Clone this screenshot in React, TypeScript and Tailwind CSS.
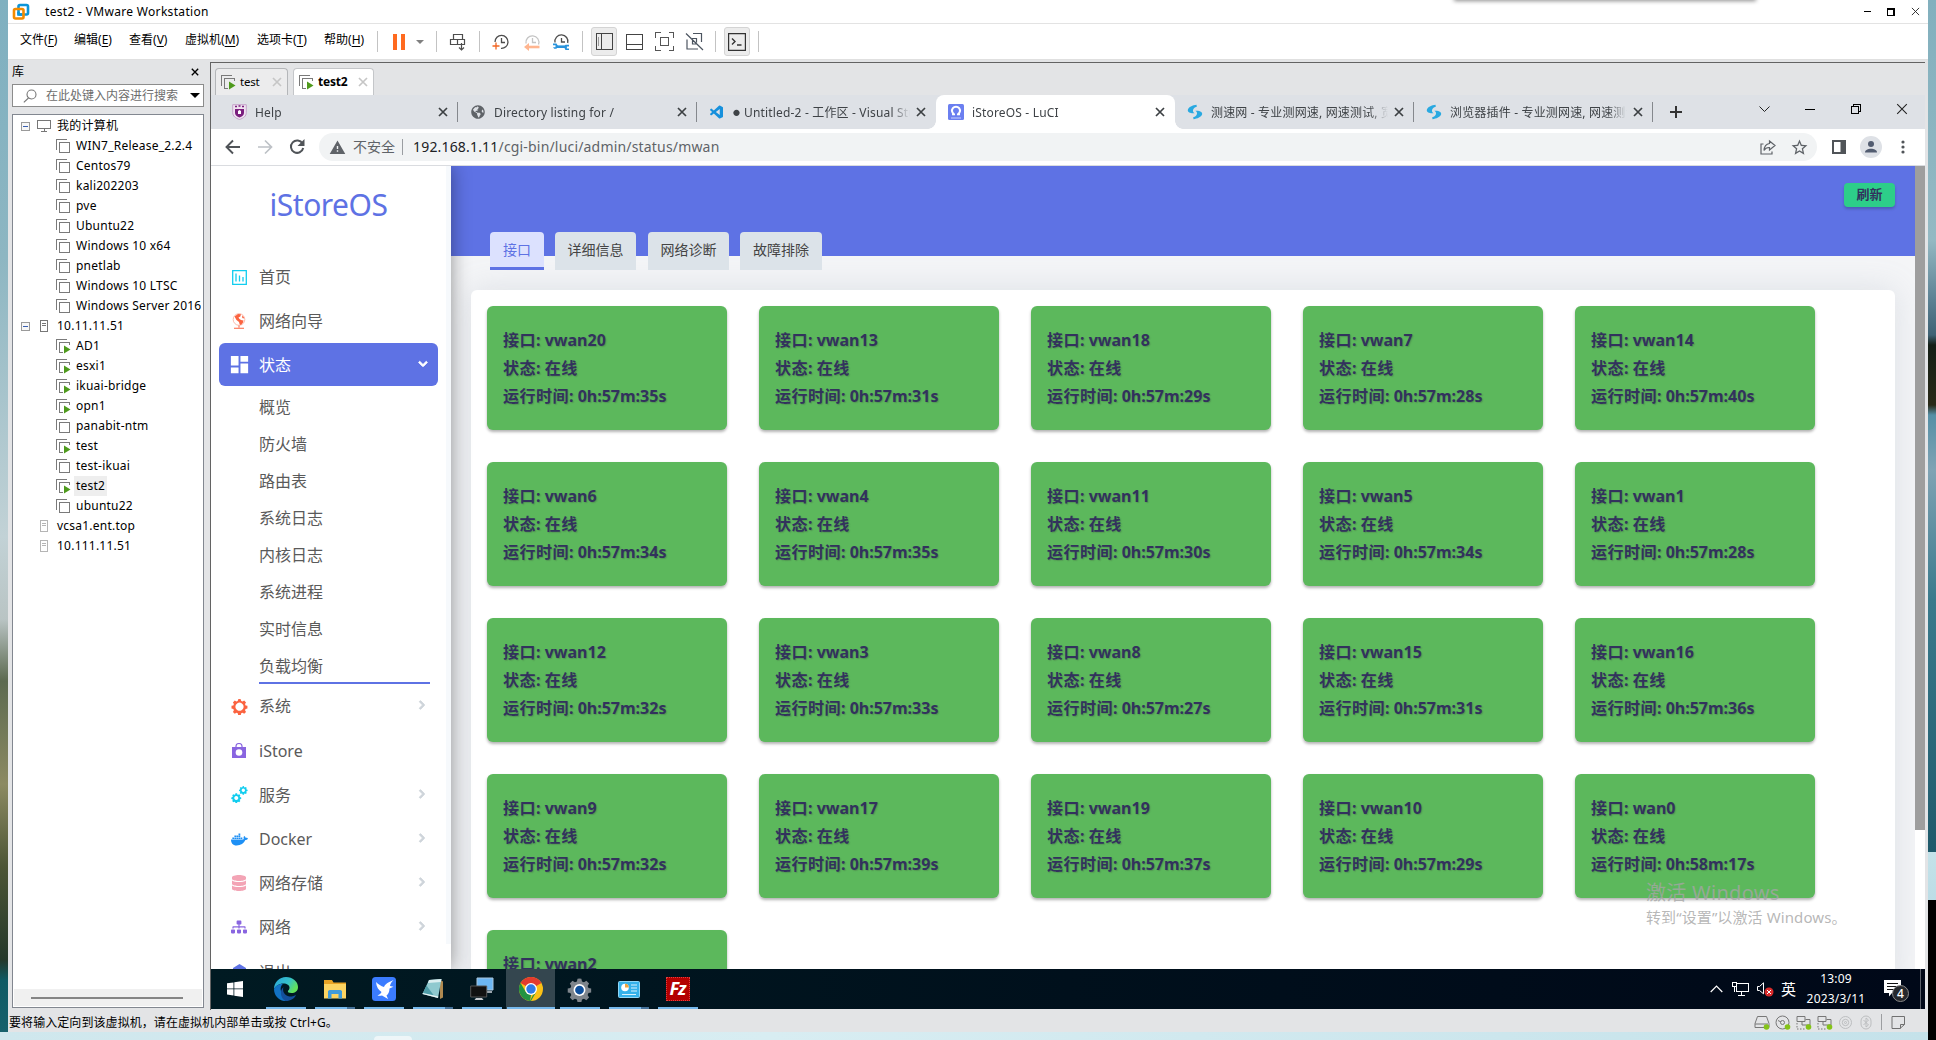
import React from "react";
import { FaDocker, FaDatabase, FaSitemap, FaChevronRight, FaChevronDown, FaGlobeAmericas } from "react-icons/fa";
import { MdDashboard, MdStarBorder, MdWarning } from "react-icons/md";
import { VscVscode } from "react-icons/vsc";

/* ---------- shared pieces ---------- */

const Sep = ({ className }: { className: string }) => <div className={`w-px h-[21px] bg-[#c3c3c3] shrink-0 ${className}`} />;

const Cell = ({ className, children }: { className: string; children: React.ReactNode }) => (
  <div className={`flex items-center justify-center shrink-0 ${className}`}>{children}</div>
);

const CloseX = ({ size, color, width }: { size: number; color: string; width: number }) => (
  <svg width={size} height={size} viewBox="0 0 10 10" fill="none" stroke={color} strokeWidth={width}>
    <path d="M1 1L9 9M9 1L1 9" />
  </svg>
);

const VmIcon = ({ on, fill }: { on?: boolean; fill: string }) => (
  <svg width="15" height="15" viewBox="0 0 15 15" fill="none" stroke="#7a7a7a" shapeRendering="crispEdges" className="shrink-0">
    <path d="M.5 11V.5H11" />
    <rect x="3.5" y="3.5" width="10" height="10" fill={fill} />
    {on && (
      <>
        <rect x="7" y="6" width="8" height="9" fill={fill} stroke="none" />
        <path d="M8 6.5v8l6.5-4z" fill="#4e9a1c" stroke="none" shapeRendering="auto" />
      </>
    )}
  </svg>
);

/* ---------- title and menu bars ---------- */

const menus: [string, string, string][] = [
  ["文件", "F", "w-[54px]"],
  ["编辑", "E", "w-[55px]"],
  ["查看", "V", "w-[56px]"],
  ["虚拟机", "M", "w-[72px]"],
  ["选项卡", "T", "w-[67px]"],
  ["帮助", "H", "w-[53px]"],
];

const clockPath = "M3 10.5A6.5 6.5 0 1 1 15.500 11.500M9.500 5V9.500H13";

function TitleBar() {
  return (
    <div className="relative flex h-[24px] items-center border-b border-[#e3e3e3] bg-white pl-1">
      <div className="absolute -top-1 left-[1447px] h-1 w-[300px] shadow-[0_0_4px_1px_rgba(0,0,0,0.45)]" />
      <svg width="18" height="18" viewBox="0 0 18 18" fill="none" strokeWidth="2.600">
        <rect x="6.500" y="2" width="9.500" height="9.500" rx="1.500" stroke="#0c95d8" />
        <rect x="2" y="6" width="9.500" height="9.500" rx="1.500" stroke="#f38b00" />
        <path d="M6.500 9V11.500H10" stroke="#0c95d8" />
      </svg>
      <span className="ml-[15px] text-[12px] leading-[20px] tracking-[0.32px] text-black">test2 - VMware Workstation</span>
      <div className="ml-auto flex items-center pr-[8px]">
        <div className="h-px w-[7px] bg-black" />
        <div className="ml-[16px] h-[8px] w-[8px] border border-t-2 border-r-2 border-black" />
        <div className="ml-[16px]">
          <CloseX size={9} color="#222" width={1} />
        </div>
      </div>
    </div>
  );
}

function MenuBar() {
  return (
    <div className="flex h-[36px] items-center border-b border-[#e0e0e0] bg-white pl-3">
      {menus.map(([t, k, w]) => (
        <div key={k} className={`${w} shrink-0 whitespace-nowrap pb-[3px] text-[12px] leading-[18px] text-black`}>
          {t}(<span className="underline underline-offset-2">{k}</span>)
        </div>
      ))}
      <Sep className="" />
      <Cell className="ml-2 w-[26px]">
        <div className="flex gap-[4px]">
          <div className="h-[16px] w-[4px] bg-[#ff6a1f]" />
          <div className="h-[16px] w-[4px] bg-[#ff6a1f]" />
        </div>
      </Cell>
      <Cell className="w-[16px]">
        <svg width="8" height="4" viewBox="0 0 8 4"><path d="M0 0h8L4 4z" fill="#808080" /></svg>
      </Cell>
      <Sep className="ml-2" />
      <Cell className="w-[42px]">
        <svg width="18" height="18" viewBox="0 0 18 18" fill="none" stroke="#4d4d4d" strokeWidth="1.200">
          <path d="M4.500 6V1.500h9V6M1.500 6.500h7v5h-7zM8.500 6.500h7v5h-7zM12.500 10v7M10 14.500l2.500 2.500 2.500-2.500" />
        </svg>
      </Cell>
      <Sep className="" />
      <Cell className="ml-[6px] w-[30px]">
        <svg width="18" height="18" viewBox="0 0 18 18" fill="none" stroke="#4d4d4d" strokeWidth="1.300">
          <path d="M3 9A6.500 6.500 0 1 1 9 15.400M9.500 5V9.500H13" />
          <path d="M.5 13h7M4 9.500v7" stroke="#f26522" />
        </svg>
      </Cell>
      <Cell className="ml-px w-[30px]">
        <svg width="18" height="18" viewBox="0 0 18 18" fill="none" stroke="#c4c4c4" strokeWidth="1.300">
          <path d={clockPath} />
          <path d="M16.500 14H6" stroke="#ffb58f" strokeWidth="2.600" />
          <path d="M1 14l5-4v8z" fill="#ffb58f" stroke="none" />
        </svg>
      </Cell>
      <Cell className="w-[28px]">
        <svg width="18" height="18" viewBox="0 0 18 18" fill="none" stroke="#4d4d4d" strokeWidth="1.300">
          <path d="M3 9.500A6.500 6.500 0 1 1 15.700 10M9.500 5V9H13" />
          <path d="M4 13.700H14.500" stroke="#2893dc" strokeWidth="2.600" />
          <path d="M1 10.500h3.500l1.500 2.500-1.500 2.800H2.200L1 14.200h2.500v-2H1zM17 11.800h-3.500L12 14l1.500 3H17v-1.500h-2.200v-2H17z" fill="#2893dc" stroke="none" />
        </svg>
      </Cell>
      <Sep className="ml-[7px]" />
      <Cell className="ml-2 h-[29px] w-[26px] rounded-[3px] border border-[#d4d4d4] bg-[#ececec]">
        <svg width="17" height="17" viewBox="0 0 17 17" fill="none" stroke="#444" shapeRendering="crispEdges">
          <path d="M.5.5h16v16H.5zM5.500.5v16" /><path d="M2.500 4v9" stroke="#999" />
        </svg>
      </Cell>
      <Cell className="w-[34px]">
        <svg width="17" height="16" viewBox="0 0 17 16" fill="none" stroke="#444" shapeRendering="crispEdges">
          <path d="M.5.5h16v15H.5zM.5 10.500h16" />
        </svg>
      </Cell>
      <Cell className="w-[26px]">
        <svg width="19" height="19" viewBox="0 0 19 19" fill="none" stroke="#555" shapeRendering="crispEdges">
          <path d="M.5 5.500v-5h5M13.500.5h5v5M18.500 13.500v5h-5M5.500 18.500h-5v-5M5.500 5.500h8v8h-8z" />
        </svg>
      </Cell>
      <Cell className="w-[34px]">
        <svg width="19" height="19" viewBox="0 0 19 19" fill="none" stroke="#4c5560" strokeWidth="1.200">
          <path d="M8 1.500h8.500V10M2 7.500v9.500h11M7 6.500H11.500V10.500M7.500 8v4h4M1 1.500l17 16.500" />
        </svg>
      </Cell>
      <Sep className="ml-1" />
      <Cell className="ml-2 h-[29px] w-[26px] rounded-[3px] border border-[#d4d4d4] bg-[#ececec]">
        <svg width="18" height="18" viewBox="0 0 18 18" fill="none" stroke="#333" strokeWidth="1.200">
          <path d="M.6.6h16.800v16.800H.6z" /><path d="M4 5.500l3 3-3 3M9 12h4.500" strokeWidth="1.400" />
        </svg>
      </Cell>
      <Sep className="ml-2" />
    </div>
  );
}

/* ---------- library panel ---------- */

type Node = { t: string; kind: "pc" | "host" | "hostOff" | "vm" | "on"; sel?: boolean };
const tree: Node[] = [
  { t: "我的计算机", kind: "pc" },
  { t: "WIN7_Release_2.2.4", kind: "vm" },
  { t: "Centos79", kind: "vm" },
  { t: "kali202203", kind: "vm" },
  { t: "pve", kind: "vm" },
  { t: "Ubuntu22", kind: "vm" },
  { t: "Windows 10 x64", kind: "vm" },
  { t: "pnetlab", kind: "vm" },
  { t: "Windows 10 LTSC", kind: "vm" },
  { t: "Windows Server 2016", kind: "vm" },
  { t: "10.11.11.51", kind: "host" },
  { t: "AD1", kind: "on" },
  { t: "esxi1", kind: "on" },
  { t: "ikuai-bridge", kind: "on" },
  { t: "opn1", kind: "on" },
  { t: "panabit-ntm", kind: "vm" },
  { t: "test", kind: "on" },
  { t: "test-ikuai", kind: "vm" },
  { t: "test2", kind: "on", sel: true },
  { t: "ubuntu22", kind: "vm" },
  { t: "vcsa1.ent.top", kind: "hostOff" },
  { t: "10.111.11.51", kind: "hostOff" },
];

const Expander = () => (
  <svg width="9" height="9" viewBox="0 0 9 9" fill="#f7f7f7" stroke="#9a9a9a" shapeRendering="crispEdges">
    <rect x=".5" y=".5" width="8" height="8" /><path d="M2 4.500h5" stroke="#3a5fb0" />
  </svg>
);

function TreeRow({ n }: { n: Node }) {
  const leaf = n.kind === "vm" || n.kind === "on";
  return (
    <div className="flex h-5 items-center whitespace-nowrap text-[12px] leading-[20px] text-black">
      {leaf ? (
        <div className="ml-[43px] flex w-[18px] shrink-0"><VmIcon on={n.kind === "on"} fill="#fff" /></div>
      ) : (
        <>
          <div className="ml-2 w-4 shrink-0">{n.kind !== "hostOff" && <Expander />}</div>
          <div className="flex w-[18px] shrink-0">
            {n.kind === "pc" ? (
              <svg width="14" height="12" viewBox="0 0 14 12" fill="none" stroke="#777" shapeRendering="crispEdges">
                <path d="M.5.5h13v8H.5zM7 9v2M4 11.500h6" />
              </svg>
            ) : (
              <svg width="9" height="12" viewBox="0 0 9 12" fill="none" stroke={n.kind === "host" ? "#777" : "#b5b5b5"} shapeRendering="crispEdges" className="ml-[3px]">
                <path d="M.5.5h7v11h-7zM2 3.500h4M2 5.500h4" />
              </svg>
            )}
          </div>
        </>
      )}
      <span className={`px-[2px] tracking-[0.23px] ${n.sel ? "bg-[#eeeeee]" : ""}`}>{n.t}</span>
    </div>
  );
}

function Library() {
  return (
    <div className="flex w-[202px] shrink-0 flex-col bg-[#e3e4e6] pl-1 pr-[6px]">
      <div className="flex h-[24px] items-center justify-between pr-[5px] text-[12px] text-black">
        <span>库</span>
        <CloseX size={8} color="#000" width={1.7} />
      </div>
      <div className="flex h-[23px] items-center border border-[#8c8c8c] bg-white pl-[10px] pr-[3px]">
        <svg width="14" height="14" viewBox="0 0 14 14" fill="none" stroke="#777" strokeWidth="1.100">
          <circle cx="8.500" cy="5.500" r="4.500" /><path d="M5.500 9L.8 13.300" />
        </svg>
        <span className="ml-[9px] whitespace-nowrap text-[12px] leading-[18px] text-[#6d6d6d]">在此处键入内容进行搜索</span>
        <svg width="10" height="5" viewBox="0 0 10 5" className="ml-auto"><path d="M0 0h10L5 5z" fill="#000" /></svg>
      </div>
      <div className="mt-[7px] flex h-[894px] flex-col overflow-hidden border border-[#828790] bg-white">
        <div className="pt-px">
          {tree.map((n) => <TreeRow key={n.t} n={n} />)}
        </div>
        <div className="mx-px mb-px mt-auto flex h-[17px] items-center justify-center bg-[#f0f0f0] pr-[2px]">
          <div className="h-[2px] w-[152px] bg-[#858585]" />
        </div>
      </div>
    </div>
  );
}

/* ---------- browser chrome ---------- */

const SpeedIcon = () => (
  <svg width="16" height="16" viewBox="0 0 16 16">
    <path d="M9.500.8C6 1.300 1.200 3 .8 6c-.2 2.500 3.500 3.800 6.800 3.200C5.500 8 5.500 6 6.800 4.500 7.700 3.500 9 3 9.800 2.800z" fill="#29a9e1" />
    <path d="M6.500 15.200c3.500-.5 8.300-2.200 8.700-5.200.2-2.500-3.500-3.800-6.800-3.200 2.100 1.200 2.100 3.200.8 4.700-.9 1-2.200 1.500-3 1.700z" fill="#29a9e1" />
  </svg>
);

const tabs: { t: string; dirty?: boolean; icon: React.ReactNode; active?: boolean; sep?: boolean }[] = [
  {
    t: "Help", sep: true,
    icon: (
      <svg width="15" height="16" viewBox="0 0 15 16">
        <path d="M.7.700h13.600v8c0 3.500-3 5.500-6.800 6.800C3.700 14.200.7 12.200.7 8.700z" fill="#efe3f0" stroke="#c5a3ca" />
        <path d="M3 5h9v4c0 2.300-2 3.500-4.500 4.500C5 12.500 3 11.300 3 9z" fill="#7b1f7e" />
        <path d="M6 7l1.500-1L9 7v3H6z" fill="#fff" /><path d="M3 2.500h2M6.500 2h2M10 2.500h2" stroke="#7b1f7e" strokeWidth="1.500" />
      </svg>
    ),
  },
  { t: "Directory listing for /", sep: true, icon: <FaGlobeAmericas size={14} color="#5f6368" /> },
  { t: "Untitled-2 - 工作区 - Visual Studio", dirty: true, icon: <VscVscode size={17} color="#1690dc" /> },
  {
    t: "iStoreOS - LuCI", active: true,
    icon: (
      <svg width="16" height="16" viewBox="0 0 16 16">
        <rect width="16" height="16" rx="1.500" fill="#6b7ff0" />
        <path d="M6.300 10.300A4 4 0 1 1 9.700 10.300" fill="none" stroke="#fff" strokeWidth="2" />
        <path d="M4 10.500h3M9 10.500h3" stroke="#fff" strokeWidth="1.600" /><path d="M3 14h10" stroke="#b9c3fb" strokeWidth="1.200" />
      </svg>
    ),
  },
  { t: "测速网 - 专业测网速, 网速测试, 宽带", sep: true, icon: <SpeedIcon /> },
  { t: "浏览器插件 - 专业测网速, 网速测试", sep: true, icon: <SpeedIcon /> },
];

function BrowserTabs() {
  return (
    <div className="flex h-[34px] bg-[#dee1e6] pl-2">
      {tabs.map((t) => (
        <div key={t.t} className={`relative flex w-[239px] shrink-0 items-center pl-3 ${t.active ? "rounded-t-lg bg-white" : ""}`}>
          {t.active && (
            <>
              <div className="absolute bottom-0 -left-2 h-2 w-2 bg-[radial-gradient(circle_at_0_0,transparent_7.5px,#fff_8px)]" />
              <div className="absolute bottom-0 -right-2 h-2 w-2 bg-[radial-gradient(circle_at_100%_0,transparent_7.5px,#fff_8px)]" />
            </>
          )}
          <div className="flex w-4 shrink-0 items-center justify-center">{t.icon}</div>
          <div className="ml-2 flex w-[177px] items-center overflow-hidden whitespace-nowrap pt-px text-[12px] leading-[20px] tracking-[0.17px] text-[#3f4347] [mask-image:linear-gradient(to_right,#000_158px,transparent_177px)]">
            {t.dirty && <span className="mr-[5px] w-[6px] text-[7px] leading-[20px]">●</span>}
            <span>{t.t}</span>
          </div>
          <div className="ml-[6px]"><CloseX size={10} color="#3c4043" width={1.7} /></div>
          {t.sep && <div className="absolute right-0 h-5 w-px bg-[#85888d]" />}
        </div>
      ))}
      <div className="flex w-[46px] items-center justify-center">
        <svg width="12" height="12" viewBox="0 0 12 12" stroke="#333" strokeWidth="2"><path d="M6 0v12M0 6h12" /></svg>
      </div>
      <div className="ml-auto flex items-center pb-[6px]">
        <Cell className="w-[46px]"><svg width="11" height="7" viewBox="0 0 11 7" fill="none" stroke="#222"><path d="M.5.500l5 5 5-5" /></svg></Cell>
        <Cell className="w-[46px]"><div className="h-px w-[10px] bg-black" /></Cell>
        <Cell className="w-[46px]">
          <svg width="10" height="10" viewBox="0 0 10 10" fill="none" stroke="#000" shapeRendering="crispEdges"><path d="M.5 2.500h7v7h-7zM2.500 2V.5h7v7H8" /></svg>
        </Cell>
        <Cell className="w-[46px]"><CloseX size={12} color="#222" width={0.9} /></Cell>
      </div>
    </div>
  );
}

function AddressRow() {
  return (
    <div className="flex h-[37px] items-center border-b border-[#dadce0] bg-white pl-[14px] text-[#5f6368]">
      <svg width="16" height="16" viewBox="0 0 16 16" fill="none" stroke="#505458" strokeWidth="1.900"><path d="M15 8H2M8 1.500L1.500 8 8 14.500" /></svg>
      <svg width="16" height="16" viewBox="0 0 16 16" fill="none" stroke="#bdc1c6" strokeWidth="1.700" className="ml-4"><path d="M1 8h13M8 1.500L14.500 8 8 14.500" /></svg>
      <svg width="16" height="16" viewBox="0 0 16 16" fill="none" stroke="#505458" strokeWidth="2" className="ml-4">
        <path d="M13.500 4.500A6.200 6.200 0 1 0 14.200 9" /><path d="M15.500 0v7h-7z" fill="#505458" stroke="none" />
      </svg>
      <div className="ml-[14px] flex h-7 w-[1498px] items-center rounded-full bg-[#f1f3f4] pl-[10px]">
        <MdWarning size={17} color="#5f6368" />
        <span className="ml-[7px] text-[14px] leading-[20px]">不安全</span>
        <div className="ml-[7px] h-4 w-px bg-[#9a9da1]" />
        <span className="ml-[10px] whitespace-nowrap text-[14px] leading-[20px] tracking-[0.18px]">
          <span className="text-[#202124]">192.168.1.11</span>/cgi-bin/luci/admin/status/mwan
        </span>
        <div className="ml-auto flex items-center pr-[8px]">
          <svg width="16" height="16" viewBox="0 0 16 16" fill="none" stroke="#5f6368" strokeWidth="1.200">
            <path d="M3.500 5H1v10h11v-2.500" /><path d="M9.500 2l5.500 4.500-5.500 4.500V8.500C6.500 8.300 5 9.500 4 11.500c.2-4 2.500-6.500 5.500-7z" />
          </svg>
          <MdStarBorder size={19} className="ml-[14px]" />
        </div>
      </div>
      <svg width="14" height="14" viewBox="0 0 14 14" className="ml-[15px]"><path d="M0 0h14v14H0z" fill="#505458" /><path d="M2 2h6.500v10H2z" fill="#fff" /></svg>
      <svg width="22" height="22" viewBox="0 0 22 22" className="ml-[14px]">
        <circle cx="11" cy="11" r="11" fill="#dee1e6" /><circle cx="11" cy="8" r="3" fill="#525c70" /><path d="M5 16.500c0-5 12-5 12 0z" fill="#525c70" />
      </svg>
      <svg width="4" height="14" viewBox="0 0 4 14" className="ml-[19px]" fill="#505458">
        <circle cx="2" cy="2" r="1.600" /><circle cx="2" cy="7" r="1.600" /><circle cx="2" cy="12" r="1.600" />
      </svg>
    </div>
  );
}

/* ---------- router page ---------- */

const gear = "M12 1.500l1.800.2.600 2.600 1.900.8 2.300-1.400 2.600 2.600-1.400 2.300.8 1.900 2.600.6v3.700l-2.600.6-.8 1.900 1.400 2.300-2.600 2.600-2.300-1.400-1.900.8-.6 2.600h-3.700l-.6-2.600-1.900-.8-2.300 1.400-2.600-2.600 1.400-2.300-.8-1.900-2.600-.6v-3.700l2.600-.6.8-1.900-1.400-2.300 2.600-2.600 2.300 1.400 1.900-.8.6-2.600z";

const iconHome = (
  <svg width="15" height="15" viewBox="0 0 15 15" fill="none" stroke="#11cdef" strokeWidth="1.300">
    <path d="M.7.700h13.600v13.600H.7zM4 3.500v8M7.500 5.500v6M11 7v4.500" />
  </svg>
);
const iconGlobe = (
  <svg width="14" height="16" viewBox="0 0 14 16" fill="#fb6340">
    <circle cx="7" cy="6.500" r="5.800" fill="none" stroke="#fbb3a3" strokeWidth=".9" />
    <path d="M2.500 3.500L6 1l3 .3-.7 2.200L6.500 4.500l1 1.500L9 7l2.500.5-.5 2L9 12l-1.300-.5L7 9 4.500 7z" />
    <path d="M10.500 2.500l1.800 2.500-1.300.5-1-1.200zM6.500 12.500h1v2h-1zM2 14.800h10v1H2z" />
  </svg>
);
const iconGear = (
  <svg width="17" height="17" viewBox="0 0 24 24"><path fillRule="evenodd" fill="#fb6340" d={`${gear}M12 6.500a5.800 5.800 0 1 0 .01 0z`} /></svg>
);
const iconBag = (
  <svg width="14" height="15" viewBox="0 0 14 15">
    <path d="M0 4h14v11H0z" fill="#8965e0" /><path d="M4 4V3a3 2.500 0 0 1 6 0v1" fill="none" stroke="#8965e0" strokeWidth="1.200" /><circle cx="7" cy="9.500" r="3.300" fill="#fff" />
  </svg>
);
const iconGears = (
  <svg width="17" height="17" viewBox="0 0 34 34" fill="#11cdef" fillRule="evenodd">
    <g transform="translate(0 13) scale(.88)"><path d={`${gear}M12 8a4.500 4.500 0 1 0 .01 0z`} /></g>
    <g transform="translate(15.500 -1) scale(.76)"><path d={`${gear}M12 8a4.500 4.500 0 1 0 .01 0z`} /></g>
  </svg>
);

const subItems = ["概览", "防火墙", "路由表", "系统日志", "内核日志", "系统进程", "实时信息", "负载均衡"];
const lower: [string, React.ReactNode, boolean][] = [
  ["系统", iconGear, true],
  ["iStore", iconBag, false],
  ["服务", iconGears, true],
  ["Docker", <FaDocker size={17} color="#1e90f5" />, true],
  ["网络存储", <FaDatabase size={16} color="#f3a4b5" />, true],
  ["网络", <FaSitemap size={16} color="#8965e0" />, true],
  ["退出", <svg width="15" height="15" viewBox="0 0 15 15"><path d="M7.500 0L14 4v8H1V4z" fill="#5e72e4" /></svg>, false],
];

function NavItem({ t, icon, arrow }: { t: string; icon: React.ReactNode; arrow?: boolean }) {
  return (
    <div className="flex h-[44.2px] shrink-0 items-center pl-[19px] pr-[19px]">
      <div className="flex w-[18px] justify-center">{icon}</div>
      <span className="ml-[11px]">{t}</span>
      {arrow && <FaChevronRight size={10} color="#ced4da" stroke="#ced4da" strokeWidth={50} className="mb-[2px] ml-auto overflow-visible" />}
    </div>
  );
}

function Sidebar() {
  return (
    <div className="z-10 flex w-[240px] shrink-0 bg-white shadow-[0_0_18px_rgba(0,0,0,0.42)]">
      <div className="flex w-[235px] flex-col text-[16px] leading-[24px]">
        <div className="flex h-[89px] shrink-0 items-start justify-center pt-[17px] text-[30px] leading-[44px] tracking-[-0.5px] text-[#5e72e4]">iStoreOS</div>
        <div className="text-[#5a5a5a]">
          <NavItem t="首页" icon={iconHome} />
          <NavItem t="网络向导" icon={iconGlobe} />
          <div className="ml-2 flex h-[43px] w-[219px] items-center rounded-md bg-[#5e72e4] pl-[11px] pr-[10px] text-white">
            <div className="flex w-[18px] justify-center"><MdDashboard size={23} className="shrink-0" /></div>
            <span className="ml-[11px]">状态</span>
            <FaChevronDown size={10} stroke="#fff" strokeWidth={50} className="mb-[2px] ml-auto overflow-visible" />
          </div>
          <div className="ml-12 mt-[2px] w-[171px]">
            {subItems.map((s, i) => (
              <div key={s} className={`flex h-[37px] items-center ${i === 7 ? "border-b-2 border-[#5e72e4] pt-[2px]" : ""}`}>{s}</div>
            ))}
          </div>
          {lower.map(([t, ic, a]) => <NavItem key={t} t={t} icon={ic} arrow={a} />)}
        </div>
      </div>
      <div className="h-[778px] w-[5px] bg-[#f6f9fc]" />
    </div>
  );
}

const cards: [string, string][] = [
  ["vwan20", "0h:57m:35s"], ["vwan13", "0h:57m:31s"], ["vwan18", "0h:57m:29s"], ["vwan7", "0h:57m:28s"], ["vwan14", "0h:57m:40s"],
  ["vwan6", "0h:57m:34s"], ["vwan4", "0h:57m:35s"], ["vwan11", "0h:57m:30s"], ["vwan5", "0h:57m:34s"], ["vwan1", "0h:57m:28s"],
  ["vwan12", "0h:57m:32s"], ["vwan3", "0h:57m:33s"], ["vwan8", "0h:57m:27s"], ["vwan15", "0h:57m:31s"], ["vwan16", "0h:57m:36s"],
  ["vwan9", "0h:57m:32s"], ["vwan17", "0h:57m:39s"], ["vwan19", "0h:57m:37s"], ["vwan10", "0h:57m:29s"], ["wan0", "0h:58m:17s"],
  ["vwan2", "0h:57m:31s"],
];

const pageTabs: [string, string][] = [
  ["接口", "w-[54px] bg-[#dce1fe] text-[#5e72e4] border-b-3 border-[#5e72e4] pt-[3px]"],
  ["详细信息", "w-[81px] ml-[11px] bg-[#dce3e9] text-[#444]"],
  ["网络诊断", "w-[81px] ml-[12px] bg-[#dce3e9] text-[#444]"],
  ["故障排除", "w-[82px] ml-[11px] bg-[#dce3e9] text-[#444]"],
];

const Zh = ({ children }: { children: React.ReactNode }) => <span className="font-bold tracking-[0.5px]">{children}</span>;

function Page() {
  return (
    <div className="relative flex h-[803px] overflow-hidden bg-[#f4f5f7]">
      <Sidebar />
      <div className="w-[1464px] shrink-0">
        <div className="h-[90px] bg-[#5e72e4]">
          <div className="flex h-[66px] items-start justify-end pr-5 pt-[17px]">
            <div className="h-6 w-[51px] rounded-[4px] bg-[#2dce89] text-center text-[13px] font-bold leading-[22px] text-[#32325d] shadow-[0_2px_3px_rgba(0,0,0,0.2)]">刷新</div>
          </div>
          <div className="flex pl-[39px]">
            {pageTabs.map(([t, c]) => (
              <div key={t} className={`flex h-[38px] items-center justify-center rounded-t pb-[3px] text-[14px] leading-[20px] ${c}`}>{t}</div>
            ))}
          </div>
        </div>
        <div className="ml-5 mt-[34px] h-[700px] w-[1424px] rounded-md bg-white px-4 pt-4 shadow-[0_0_32px_rgba(136,152,170,0.22)]">
          <div className="grid w-[1328px] grid-cols-5 gap-8">
            {cards.map(([n, t]) => (
              <div key={n} className="h-[124px] rounded-md bg-[#5cb85c] pl-4 pt-5 text-[16px] font-bold leading-[28px] text-[#32325d] shadow-[0_2px_3px_rgba(0,0,0,0.3)] [text-shadow:1px_1px_1px_rgba(60,60,60,0.25)]">
                <div><Zh>接口</Zh>: {n}</div>
                <div><Zh>状态</Zh>: <Zh>在线</Zh></div>
                <div className="whitespace-nowrap"><Zh>运行时间</Zh>: {t}</div>
              </div>
            ))}
          </div>
        </div>
      </div>
      <div className="h-full w-[10px] bg-white"><div className="h-[664px] bg-[#9e9e9e]" /></div>
      <div className="absolute left-[1435px] top-[713px] z-20 text-[#a5a5a5]/80">
        <div className="text-[20px] leading-[28px] tracking-[0.3px]">激活 Windows</div>
        <div className="text-[15px] leading-[20px] tracking-[0.1px]">转到“设置”以激活 Windows。</div>
      </div>
    </div>
  );
}

/* ---------- taskbar ---------- */

const taskIcons: { icon: React.ReactNode; bar: number; active?: boolean }[] = [
  {
    bar: 0,
    icon: <svg width="16" height="16" viewBox="0 0 16 16" fill="#fff" className="mr-[3px]"><path d="M0 2.300l6.500-.9v6.100H0zM7.300 1.300L16 0v7.500H7.300zM0 8.300h6.500v6.200L0 13.600zM7.300 8.300H16V16l-8.700-1.300z" /></svg>,
  },
  {
    bar: 1,
    icon: (
      <svg width="24" height="24" viewBox="0 0 24 24">
        <defs>
          <linearGradient id="eg" x1="0" y1="0" x2="1" y2=".5"><stop offset="0" stopColor="#2aa5dc" /><stop offset=".6" stopColor="#35c1c9" /><stop offset="1" stopColor="#62e25a" /></linearGradient>
        </defs>
        <path d="M0 12C0 5 5.500 0 12 0s12 4.500 12 10c0 4-3 6-6.500 6-3 0-4-1-3.500-2s1.500-1.500 1.500-3.500S13 6.500 9.500 6.500C5 6.500 1.500 9 0 12z" fill="url(#eg)" />
        <path d="M0 12c1.500-3 5-5.500 9-5.300C7 8.500 6 11 7 14.500c1 4 5 6.500 9 6.500-2 2.500-4.500 3-6 2.900C4 23 0 18 0 12z" fill="#1272c4" />
        <path d="M9.500 10c-1.500 4 1 9 6 9.500 2.500.2 5-.7 6.500-1.500-1.500 3.500-5.500 6-10 6-4.500-1-7.500-10-2.500-14z" fill="#134f9c" />
      </svg>
    ),
  },
  {
    bar: 2,
    icon: (
      <svg width="22" height="19" viewBox="0 0 22 19">
        <path d="M0 0h8l1.500 2.500H22V8H0z" fill="#e8a325" /><path d="M0 4h22v14.500H0z" fill="#fcd462" /><path d="M4 18.500V11l1.500-1h11l1.500 1v7.500h-3.500V14h-7v4.500z" fill="#3f9bdc" />
      </svg>
    ),
  },
  {
    bar: 1,
    icon: (
      <svg width="24" height="24" viewBox="0 0 24 24">
        <rect width="24" height="24" rx="3.500" fill="#3b7cff" />
        <path d="M4 5c2.500 2.500 5 4 8 5 1-3 4-4.500 9.500-7-2 2-3 3.500-3.500 6l3.500.8-4 1.700c0 3.500-1.500 6-3 7l1.500 3.500-6-3.500c-1.800.5-3.500.3-4.500 0 2-.8 3.500-2 4-3.500C6.500 13 4.500 10 4 5z" fill="#fff" />
      </svg>
    ),
  },
  {
    bar: 2,
    icon: (
      <svg width="24" height="24" viewBox="0 0 24 24">
        <path d="M19 3l3 1.500v16L19 22z" fill="#b08a50" /><path d="M8 3l12.500-1-3.500 19L1.500 17z" fill="#8fc9cf" /><path d="M8 3l12.500-1-.6 3L7 6z" fill="#dbeef0" /><path d="M5.500 8.500l7 9.500-11-1z" fill="#4f9da8" /><path d="M1.500 17l15.500 4 .3-1.500L2 16z" fill="#eaf4f5" />
      </svg>
    ),
  },
  {
    bar: 1,
    icon: (
      <svg width="24" height="24" viewBox="0 0 24 24">
        <path d="M7 1h16v12H7z" fill="#6cb7f4" stroke="#a9c6dc" /><path d="M17 14h5v2h-5z" fill="#9aa4ac" /><path d="M.7 9h16v11H.7z" fill="#111" stroke="#555" /><path d="M6 21h6l1.500 2h-9z" fill="#c8ccd0" />
      </svg>
    ),
  },
  {
    bar: 1, active: true,
    icon: (
      <svg width="24" height="24" viewBox="0 0 24 24">
        <circle cx="12" cy="12" r="12" fill="#fbc116" />
        <path d="M12 12L1.600 6A12 12 0 0 1 22.400 6z" fill="#e33b2e" />
        <path d="M1.600 6L6.800 15l5.200 3-1 6A12 12 0 0 1 1.600 6z" fill="#229342" /><path d="M17.200 15L12 24h-1l3-6z" fill="#229342" />
        <circle cx="12" cy="12" r="6" fill="#fff" /><circle cx="12" cy="12" r="4.700" fill="#2f7be6" />
      </svg>
    ),
  },
  {
    bar: 1,
    icon: <svg width="25" height="25" viewBox="0 0 24 24"><path d={gear} fill="#7e858c" /><circle cx="12" cy="12.500" r="5.700" fill="#fff" /><circle cx="12" cy="12.500" r="4.200" fill="#0d4f9c" /></svg>,
  },
  {
    bar: 2,
    icon: (
      <svg width="22" height="17" viewBox="0 0 22 17">
        <rect x=".5" y=".5" width="21" height="16" rx="1" fill="#35b1ea" stroke="#8fd6f6" /><circle cx="7" cy="6.500" r="3.800" fill="#fff" /><path d="M7 6.500V2.700A3.800 3.800 0 0 1 10.800 6.500z" fill="#f2a43a" /><path d="M13 4h6M13 7h6M13 10h6M4 13.500h14" stroke="#d8f2fd" strokeWidth="1.200" />
      </svg>
    ),
  },
  {
    bar: 1,
    icon: (
      <div className="h-6 w-6 border border-dotted border-[#e04040] bg-[#b30000] text-center text-[18px] font-bold italic leading-[21px] tracking-[-1px] text-white">Fz</div>
    ),
  },
];

function Taskbar() {
  return (
    <div className="flex h-10 bg-[linear-gradient(to_right,#001a22,#00101c_50%,#000818)]">
      <div className="flex">
        {taskIcons.map((t, i) => (
          <div key={i} className={`relative flex h-10 items-center justify-center ${i === 0 ? "w-[50px]" : "w-[49px]"} ${t.active ? "bg-[#34464f]" : ""}`}>
            {t.icon}
            {t.bar > 0 && (
              <div className={`absolute bottom-0 flex h-[2px] bg-[#76b9ed] ${t.active ? "w-[48px]" : "w-10"}`}>
                {t.bar === 2 && <div className="ml-auto h-full w-2 bg-[#45729a]" />}
              </div>
            )}
          </div>
        ))}
      </div>
      <div className="ml-auto flex items-center text-white">
        <svg width="13" height="8" viewBox="0 0 13 8" fill="none" stroke="#fff" strokeWidth="1.200"><path d="M.7 7l5.800-5.800L12.300 7" /></svg>
        <svg width="17" height="14" viewBox="0 0 17 14" fill="none" stroke="#fff" shapeRendering="crispEdges" className="ml-[9px]">
          <path d="M5 1.500h11v8H4.500V5M9.500 10v3M6 13.500h7M.5.500h4v4h-4zM2.500 5v5" />
        </svg>
        <svg width="17" height="15" viewBox="0 0 17 15" fill="none" stroke="#fff" className="ml-2">
          <path d="M.5 4.500h2L6.500.8v11L2.500 8.500h-2z" /><circle cx="12" cy="10" r="4.500" fill="#d92b2b" stroke="none" /><path d="M10 8l4 4M14 8l-4 4" />
        </svg>
        <span className="ml-[7px] text-[15px] leading-[20px]">英</span>
        <div className="ml-[6px] w-[68px] text-center text-[12px] leading-[20px] tracking-[0.2px]"><div>13:09</div><div>2023/3/11</div></div>
        <div className="relative ml-[14px] h-6 w-6">
          <svg width="17" height="17" viewBox="0 0 17 17" className="mt-[3px]"><path d="M0 0h17v13H8l-3 3.500V13H0z" fill="#fff" /><path d="M3 3.500h11M3 6.500h11M3 9.500h7" stroke="#111" /></svg>
          <div className="absolute -right-[1px] top-[8px] h-[17px] w-[17px] rounded-full border border-[#8a8a8a] bg-[#26282c] text-center text-[12px] font-medium leading-[15px]">4</div>
        </div>
        <div className="ml-[12px] mr-1 h-10 w-px bg-[#5b616b]" />
      </div>
    </div>
  );
}

/* ---------- VM console ---------- */

function Console() {
  return (
    <div className="flex h-[948px] w-[1715px] shrink-0 flex-col border-l border-t border-[#636363] bg-[#e3e4e6]">
      <div className="flex h-[32px] items-end pl-1">
        <div className="flex h-[27px] w-[73px] items-center rounded-t border border-b-0 border-[#b4b6b9] bg-[#ececed] pl-[5px] text-[12px] text-black">
          <VmIcon on fill="#ececed" /><span className="ml-1 text-[11.500px] leading-[20px] tracking-[-0.2px]">test</span>
          <div className="ml-auto mr-[5px]"><CloseX size={10} color="#c6c6c6" width={1.7} /></div>
        </div>
        <div className="ml-[5px] flex h-[27px] w-[81px] items-center rounded-t border border-b-0 border-[#c4c6c9] bg-white pl-[5px] text-[12px] font-bold text-black">
          <VmIcon on fill="#fff" /><span className="ml-[4px] leading-[20px] tracking-[-0.2px]">test2</span>
          <div className="ml-auto mr-[5px]"><CloseX size={10} color="#c6c6c6" width={1.7} /></div>
        </div>
      </div>
      <BrowserTabs />
      <AddressRow />
      <Page />
      <Taskbar />
    </div>
  );
}

/* ---------- status bar ---------- */

const Dot = () => <circle cx="12.500" cy="12" r="2.800" fill="#84c318" stroke="none" />;

function StatusBar() {
  return (
    <div className="flex h-[22px] items-center bg-[#e3e4e6] pl-px text-[12px] text-black">
      <span className="whitespace-nowrap pt-[4px] leading-[18px] tracking-[0.07px]">要将输入定向到该虚拟机，请在虚拟机内部单击或按 Ctrl+G。</span>
      <div className="ml-auto flex items-center gap-[5px] pr-[22px] pt-[2px]">
        <svg width="16" height="15" viewBox="0 0 16 15" fill="none" stroke="#777"><path d="M3.500 1.500h9l2.500 7v4H1v-4zM1 9h13" /><Dot /></svg>
        <svg width="16" height="15" viewBox="0 0 16 15" fill="none" stroke="#777"><circle cx="7.500" cy="7.500" r="6.500" /><circle cx="7.500" cy="7.500" r="2" /><path d="M3 5.500L6 7" /><Dot /></svg>
        {[0, 1].map((k) => (
          <svg key={k} width="16" height="15" viewBox="0 0 16 15" fill="none" stroke="#777"><path d="M1 1.500h8v5H1z" /><path d="M6 6v4h8V4.500H9.500" /><path d="M1 8v6h8" strokeDasharray="1.500 1.500" /><Dot /></svg>
        ))}
        <svg width="16" height="15" viewBox="0 0 16 15" fill="none" stroke="#bcbec0"><circle cx="7.500" cy="7.500" r="6" /><circle cx="7.500" cy="7.500" r="3.200" /><circle cx="7.500" cy="7.500" r="1" /></svg>
        <svg width="14" height="15" viewBox="0 0 14 15" fill="none" stroke="#bcbec0"><rect x="2" y="1" width="10" height="13" rx="5" /><path d="M4.500 5l5 5L7 12V3l2.500 2-5 5" /></svg>
        <div className="ml-[3px] h-4 w-px bg-[#9c9ea1]" />
        <svg width="15" height="15" viewBox="0 0 15 15" fill="none" stroke="#707070" className="ml-[4px]"><path d="M1 1.500h12.500v8L9 13.500H1zM13.500 9.500H9.500v4" /></svg>
      </div>
    </div>
  );
}

export default function App() {
  return (
    <div className="flex h-[1040px] w-[1936px] overflow-hidden bg-black font-['Noto_Sans','Noto_Sans_CJK_SC',sans-serif]">
      <div className="flex w-[1928px] shrink-0 flex-col">
        <div className="flex h-[1032px]">
          <div className="w-2 shrink-0 bg-[linear-gradient(to_bottom,#7fb0c0_0,#8db6c2_25%,#c2d2d6_52%,#b9c4c4_60%,#5c6a50_66%,#8c8a62_76%,#4c5535_84%,#24382a_93%,#0f5a64_95%,#17616c_100%)]" />
          <div className="flex w-[1920px] flex-col bg-[#e3e4e6]">
            <TitleBar />
            <MenuBar />
            <div className="flex h-[950px]">
              <Library />
              <div className="pt-[2px]"><Console /></div>
            </div>
            <StatusBar />
          </div>
        </div>
        <div className="flex h-2 bg-[linear-gradient(to_right,#cfe7ed,#d8edf2_40%,#c5e2ea)] pl-[374px]">
          <div className="mt-1 h-1 w-[38px] rounded-t-sm bg-[#eef6f8]" />
        </div>
      </div>
      <div className="w-2 shrink-0 bg-[linear-gradient(to_bottom,#82b0be_0,#94b9c3_240px,#5c8193_300px,#3f6274_335px,#141f16_345px,#2a2a18_405px,#5690a6_415px,#7fa3b4_470px,#3a7a8c_600px,#1f5a6b_852px,#c4e2e9_852px,#bcdde6_900px,#000_900px)]" />
    </div>
  );
}
